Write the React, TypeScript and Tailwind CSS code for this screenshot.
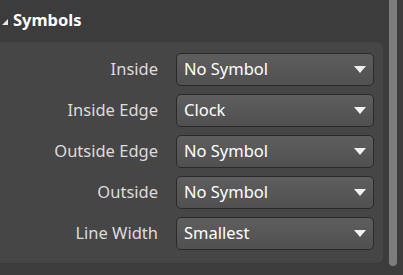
import React from 'react';

const rows = [
  { label: 'Inside', value: 'No Symbol' },
  { label: 'Inside Edge', value: 'Clock' },
  { label: 'Outside Edge', value: 'No Symbol' },
  { label: 'Outside', value: 'No Symbol' },
  { label: 'Line Width', value: 'Smallest' },
];

function Dropdown({ value }: { value: string }) {
  return (
    <div className="w-[198px] h-[33px] rounded-[5px] border border-[#2a2a2a] bg-gradient-to-b from-[#5e5e5e] to-[#505050] flex items-center justify-between pl-[7px] pr-[7px]">
      <span className="text-[16.5px] text-white leading-none">{value}</span>
      <svg width="12" height="7" viewBox="0 0 12 7" className="mr-[0px]">
        <polygon points="0,0 12,0 6,7" fill="#f2f2f2" />
      </svg>
    </div>
  );
}

export default function App() {
  return (
    <div
      className="w-[403px] h-[275px] bg-[#3c3c3c] flex overflow-hidden"
      style={{ fontFamily: '"Noto Sans", "Open Sans", sans-serif' }}
    >
      <div className="w-[383px] flex flex-col">
        <div className="h-[42px] flex items-center pb-[2px]">
          <svg width="6" height="6" viewBox="0 0 6 6" className="ml-[2px] mt-[3px]">
            <polygon points="6,0 6,6 0,6" fill="#e8e8e8" />
          </svg>
          <span className="ml-[5px] text-[16.5px] font-bold text-white">Symbols</span>
        </div>
        <div className="h-[221px] bg-[#464646] rounded-r-[6px] flex flex-col gap-[8px] pt-[11px]">
          {rows.map((r) => (
            <div key={r.label} className="flex items-center">
              <span className="w-[158px] text-right text-[16.5px] text-[#dcdcdc] leading-none">{r.label}</span>
              <div className="ml-[18px]">
                <Dropdown value={r.value} />
              </div>
            </div>
          ))}
        </div>
      </div>
      <div className="ml-[6px] w-[8px] h-[266px] bg-[#7d7d7d] rounded-b-full" />
    </div>
  );
}
